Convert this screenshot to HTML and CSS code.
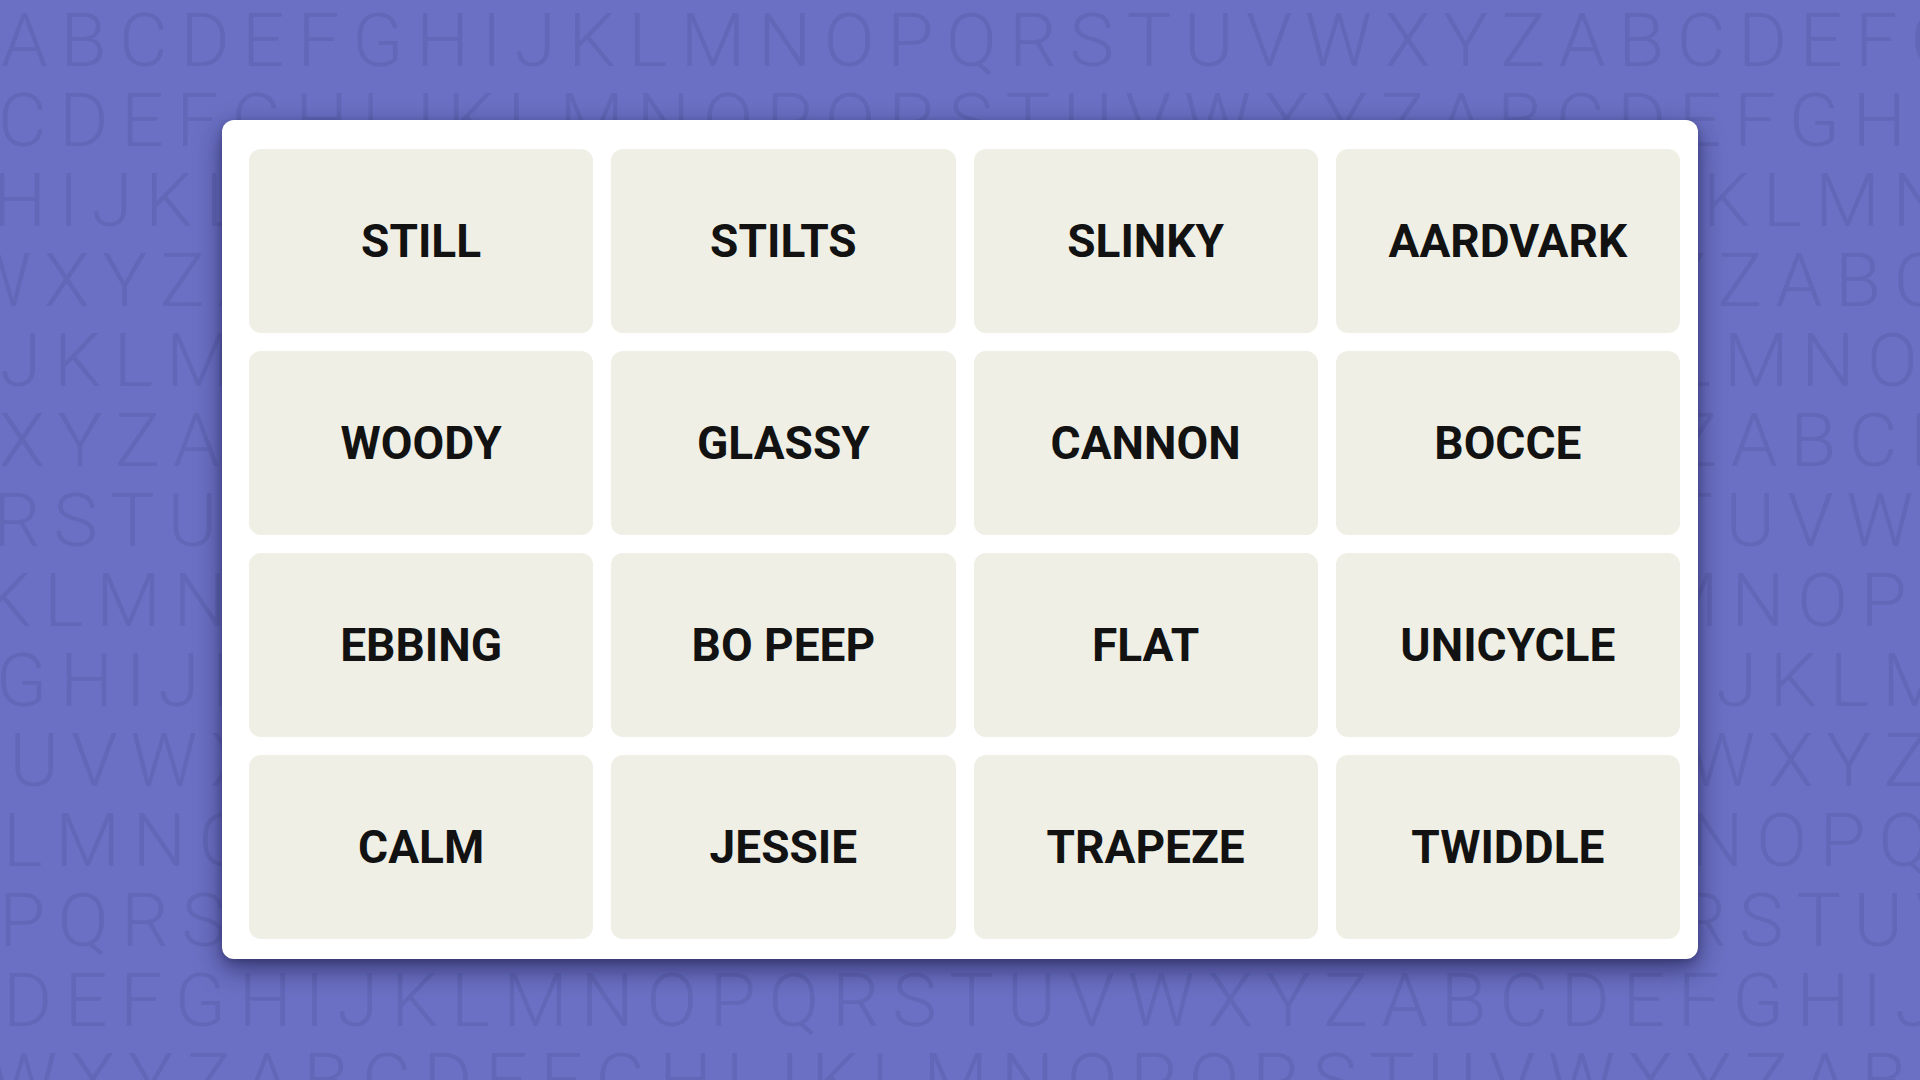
FILE: index.html
```html
<!DOCTYPE html>
<html lang="en">
<head>
    <meta charset="UTF-8">
    <meta name="viewport" content="width=device-width, initial-scale=1.0">
    <title>Connections</title>
    <link rel="stylesheet" href="styles.css">
</head>
<body>
    <!-- alphabet wallpaper behind the board -->
    <div class="backdrop" aria-hidden="true">
        <div class="letter-row">ABCDEFGHIJKLMNOPQRSTUVWXYZABCDEFGH</div>
        <div class="letter-row">CDEFGHIJKLMNOPQRSTUVWXYZABCDEFGHIJ</div>
        <div class="letter-row">HIJKLMNOPQRSTUVWXYZABCDEFGHIJKLMNO</div>
        <div class="letter-row">WXYZABCDEFGHIJKLMNOPQRSTUVWXYZABCD</div>
        <div class="letter-row">JKLMNOPQRSTUVWXYZABCDEFGHIJKLMNOPQ</div>
        <div class="letter-row">XYZABCDEFGHIJKLMNOPQRSTUVWXYZABCDE</div>
        <div class="letter-row">RSTUVWXYZABCDEFGHIJKLMNOPQRSTUVWXY</div>
        <div class="letter-row">KLMNOPQRSTUVWXYZABCDEFGHIJKLMNOPQR</div>
        <div class="letter-row">GHIJKLMNOPQRSTUVWXYZABCDEFGHIJKLMN</div>
        <div class="letter-row">TUVWXYZABCDEFGHIJKLMNOPQRSTUVWXYZA</div>
        <div class="letter-row">LMNOPQRSTUVWXYZABCDEFGHIJKLMNOPQRS</div>
        <div class="letter-row">PQRSTUVWXYZABCDEFGHIJKLMNOPQRSTUVW</div>
        <div class="letter-row">DEFGHIJKLMNOPQRSTUVWXYZABCDEFGHIJK</div>
        <div class="letter-row">WXYZABCDEFGHIJKLMNOPQRSTUVWXYZABCD</div>
    </div>

    <main class="page">
        <div class="board">
            <div class="tile">STILL</div>
            <div class="tile">STILTS</div>
            <div class="tile">SLINKY</div>
            <div class="tile">AARDVARK</div>

            <div class="tile">WOODY</div>
            <div class="tile">GLASSY</div>
            <div class="tile">CANNON</div>
            <div class="tile">BOCCE</div>

            <div class="tile">EBBING</div>
            <div class="tile">BO PEEP</div>
            <div class="tile">FLAT</div>
            <div class="tile">UNICYCLE</div>

            <div class="tile">CALM</div>
            <div class="tile">JESSIE</div>
            <div class="tile">TRAPEZE</div>
            <div class="tile">TWIDDLE</div>
        </div>
    </main>
</body>
</html>
```

FILE: styles.css
```css
* {
    margin: 0;
    padding: 0;
    box-sizing: border-box;
}

body {
    width: 1920px;
    height: 1080px;
    overflow: hidden;
    position: relative;
    background-color: #6b70c4;
    font-family: Roboto, "Liberation Sans", Arial, sans-serif;
}

/* letter wallpaper */
.backdrop {
    position: absolute;
    inset: 0;
    overflow: hidden;
    z-index: 0;
}

.letter-row {
    font-size: 75px;
    font-weight: 300;
    line-height: 80px;
    height: 80px;
    letter-spacing: 12.6px;
    white-space: nowrap;
    color: #6267b7;
}

/* each row starts at a slightly different spot */
.letter-row:nth-child(1)  { margin-left: 1px; }
.letter-row:nth-child(2)  { margin-left: -2px; }
.letter-row:nth-child(3)  { margin-left: -7px; }
.letter-row:nth-child(4)  { margin-left: -36px; }
.letter-row:nth-child(5)  { margin-left: 0; }
.letter-row:nth-child(6)  { margin-left: -1px; }
.letter-row:nth-child(7)  { margin-left: -7px; }
.letter-row:nth-child(8)  { margin-left: -16px; }
.letter-row:nth-child(9)  { margin-left: -4px; }
.letter-row:nth-child(10) { margin-left: -48px; }
.letter-row:nth-child(11) { margin-left: 3px; }
.letter-row:nth-child(12) { margin-left: -1px; }
.letter-row:nth-child(13) { margin-left: 3px; }
.letter-row:nth-child(14) { margin-left: -10px; }

/* board */
.page {
    position: relative;
    z-index: 1;
    padding: 120px 0 0 222px;
}

.board {
    width: 1476px;
    height: 839px;
    padding: 29px 18px 20px 27px;
    background: #ffffff;
    border-radius: 12px;
    box-shadow: 0 10px 26px rgba(20, 20, 60, 0.6), 0 2px 6px rgba(20, 20, 60, 0.25);
    display: grid;
    grid-template-columns: repeat(4, 1fr);
    grid-template-rows: repeat(4, 1fr);
    gap: 18px;
}

.tile {
    background: #efefe6;
    border-radius: 12px;
    display: flex;
    align-items: center;
    justify-content: center;
    font-size: 46px;
    font-weight: 700;
    color: #121212;
    text-transform: uppercase;
}
```
